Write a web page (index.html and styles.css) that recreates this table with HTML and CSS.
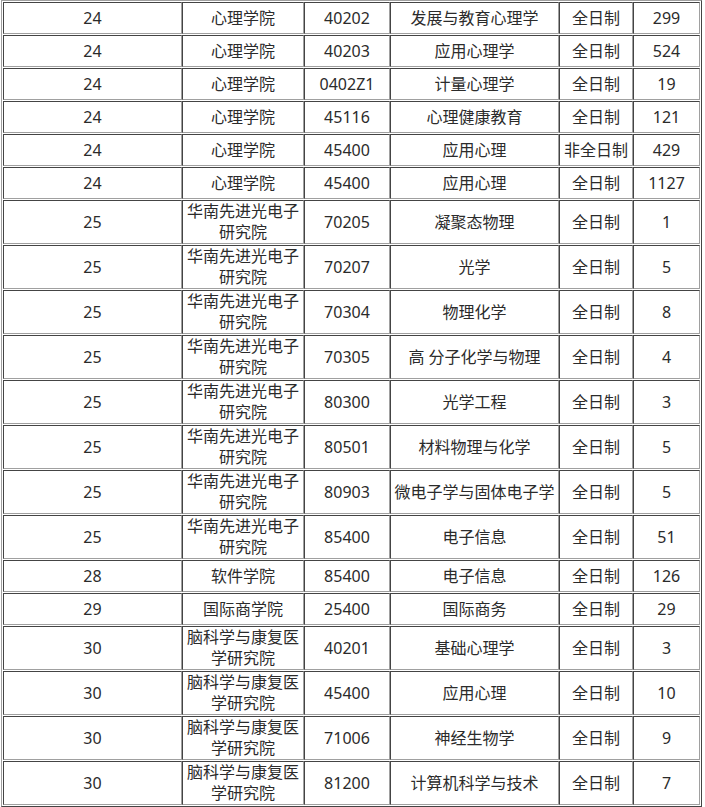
FILE: index.html
```html
<!DOCTYPE html>
<html lang="zh-CN">
<head>
<meta charset="utf-8">
<title>招生专业目录</title>
<link rel="stylesheet" href="styles.css">
</head>
<body>
<table class="grid">
<colgroup>
<col class="c1"><col class="c2"><col class="c3"><col class="c4"><col class="c5"><col class="c6">
</colgroup>
<tbody>
<tr><td>24</td><td>心理学院</td><td>40202</td><td>发展与教育心理学</td><td>全日制</td><td>299</td></tr>
<tr><td>24</td><td>心理学院</td><td>40203</td><td>应用心理学</td><td>全日制</td><td>524</td></tr>
<tr><td>24</td><td>心理学院</td><td>0402Z1</td><td>计量心理学</td><td>全日制</td><td>19</td></tr>
<tr><td>24</td><td>心理学院</td><td>45116</td><td>心理健康教育</td><td>全日制</td><td>121</td></tr>
<tr><td>24</td><td>心理学院</td><td>45400</td><td>应用心理</td><td>非全日制</td><td>429</td></tr>
<tr><td>24</td><td>心理学院</td><td>45400</td><td>应用心理</td><td>全日制</td><td>1127</td></tr>
<tr><td>25</td><td>华南先进光电子研究院</td><td>70205</td><td>凝聚态物理</td><td>全日制</td><td>1</td></tr>
<tr><td>25</td><td>华南先进光电子研究院</td><td>70207</td><td>光学</td><td>全日制</td><td>5</td></tr>
<tr><td>25</td><td>华南先进光电子研究院</td><td>70304</td><td>物理化学</td><td>全日制</td><td>8</td></tr>
<tr><td>25</td><td>华南先进光电子研究院</td><td>70305</td><td>高 分子化学与物理</td><td>全日制</td><td>4</td></tr>
<tr><td>25</td><td>华南先进光电子研究院</td><td>80300</td><td>光学工程</td><td>全日制</td><td>3</td></tr>
<tr><td>25</td><td>华南先进光电子研究院</td><td>80501</td><td>材料物理与化学</td><td>全日制</td><td>5</td></tr>
<tr><td>25</td><td>华南先进光电子研究院</td><td>80903</td><td>微电子学与固体电子学</td><td>全日制</td><td>5</td></tr>
<tr><td>25</td><td>华南先进光电子研究院</td><td>85400</td><td>电子信息</td><td>全日制</td><td>51</td></tr>
<tr><td>28</td><td>软件学院</td><td>85400</td><td>电子信息</td><td>全日制</td><td>126</td></tr>
<tr><td>29</td><td>国际商学院</td><td>25400</td><td>国际商务</td><td>全日制</td><td>29</td></tr>
<tr><td>30</td><td>脑科学与康复医学研究院</td><td>40201</td><td>基础心理学</td><td>全日制</td><td>3</td></tr>
<tr><td>30</td><td>脑科学与康复医学研究院</td><td>45400</td><td>应用心理</td><td>全日制</td><td>10</td></tr>
<tr><td>30</td><td>脑科学与康复医学研究院</td><td>71006</td><td>神经生物学</td><td>全日制</td><td>9</td></tr>
<tr><td>30</td><td>脑科学与康复医学研究院</td><td>81200</td><td>计算机科学与技术</td><td>全日制</td><td>7</td></tr>
</tbody>
</table>
</body>
</html>
```

FILE: styles.css
```css
html, body {
  margin: 0;
  padding: 0;
  background: #ffffff;
}

body {
  font-family: "Noto Sans", "Noto Sans CJK SC", sans-serif;
  font-size: 16px;
  color: #2b2b2b;
}

.grid {
  margin: 0 0 0 1px;
  width: 701px;
  table-layout: fixed;
  border-collapse: separate;
  border-spacing: 0 1px;
  padding: 0 1px;
  border-style: solid;
  border-width: 1px;
  border-color: #a0a0a0 #444444 #444444 #a0a0a0;
}

.c1 { width: 179px; }
.c2 { width: 122px; }
.c3 { width: 86px; }
.c4 { width: 169px; }
.c5 { width: 74px; }
.c6 { width: 67px; }

.grid td {
  height: 30px;
  padding: 0;
  line-height: 21px;
  text-align: center;
  vertical-align: middle;
  border-style: solid;
  border-width: 1px;
  border-color: #444444 #a0a0a0 #a0a0a0 #444444;
}
```
